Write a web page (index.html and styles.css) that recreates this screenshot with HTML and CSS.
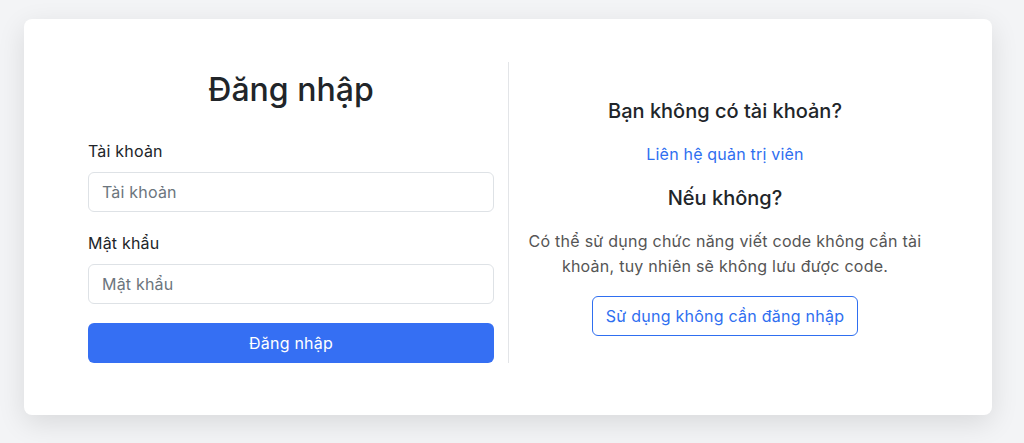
FILE: index.html
```html
<!DOCTYPE html>
<html lang="vi">
<head>
<meta charset="utf-8">
<title>Đăng nhập</title>
<link rel="stylesheet" href="styles.css">
</head>
<body>
<main class="page">
  <section class="card">
    <form class="login">
      <h2 class="login-title">Đăng nhập</h2>
      <label class="field-label" for="user">Tài khoản</label>
      <input class="field-input" id="user" type="text" placeholder="Tài khoản">
      <label class="field-label" for="pass">Mật khẩu</label>
      <input class="field-input" id="pass" type="password" placeholder="Mật khẩu">
      <button class="btn-primary" type="button">Đăng nhập</button>
    </form>
    <div class="side">
      <h4 class="side-title">Bạn không có tài khoản?</h4>
      <a class="side-link" href="#">Liên hệ quản trị viên</a>
      <h4 class="side-title side-title-2">Nếu không?</h4>
      <p class="side-text">Có thể sử dụng chức năng viết code không cần tài khoản, tuy nhiên sẽ không lưu được code.</p>
      <button class="btn-outline" type="button">Sử dụng không cần đăng nhập</button>
    </div>
  </section>
</main>
</body>
</html>
```
FILE: styles.css
```css
* { box-sizing: border-box; }
html, body { margin: 0; }
body {
  background: #f3f4f6;
  font-family: Inter, "Noto Sans", sans-serif;
  color: #212529;
  height: 443px;
  overflow: hidden;
}
.page {
  padding: 19px 32px 0 24px;
}
.card {
  width: 968px;
  height: 396px;
  background: #fff;
  border-radius: 8px;
  box-shadow: 0 8px 28px rgba(0, 0, 0, 0.11);
  padding: 43px 51px 0 64px;
  display: grid;
  grid-template-columns: 420px 1fr;
  align-items: start;
}
.login {
  display: flex;
  flex-direction: column;
  padding: 9px 14px 0 0;
}
.login-title {
  margin: 0 0 30px;
  font-size: 32px;
  line-height: 38px;
  font-weight: 500;
  text-align: center;
}
.field-label {
  font-size: 16px;
  line-height: 24px;
  letter-spacing: 0.2px;
  margin-bottom: 9px;
}
.field-input {
  height: 40px;
  border: 1px solid #dee2e6;
  border-radius: 6px;
  padding: 0 13px;
  font: inherit;
  font-size: 16px;
  letter-spacing: 0.2px;
  color: #212529;
  margin-bottom: 19px;
}
.field-input::placeholder { color: #6c757d; }
.btn-primary {
  height: 40px;
  border: 0;
  border-radius: 6px;
  background: #356ff3;
  color: #fff;
  font: inherit;
  font-size: 16px;
  letter-spacing: 0.2px;
}
.side {
  border-left: 1px solid #e3e5e8;
  height: 301px;
  display: flex;
  flex-direction: column;
  align-items: center;
  padding: 37px 16px 0;
  text-align: center;
}
.side-title {
  margin: 0;
  font-size: 20px;
  line-height: 24px;
  font-weight: 500;
}
.side-link {
  margin-top: 19px;
  font-size: 16px;
  line-height: 24px;
  letter-spacing: 0.2px;
  color: #2f6ff0;
  text-decoration: none;
}
.side-title-2 { margin-top: 20px; }
.side-text {
  margin: 19px 0 17px;
  font-size: 16px;
  line-height: 25px;
  letter-spacing: 0.25px;
  color: #555;
}
.btn-outline {
  height: 40px;
  padding: 0 13px;
  border: 1px solid #2f6ff0;
  border-radius: 6px;
  background: #fff;
  color: #2f6ff0;
  font: inherit;
  font-size: 16px;
  letter-spacing: 0.25px;
}
```
